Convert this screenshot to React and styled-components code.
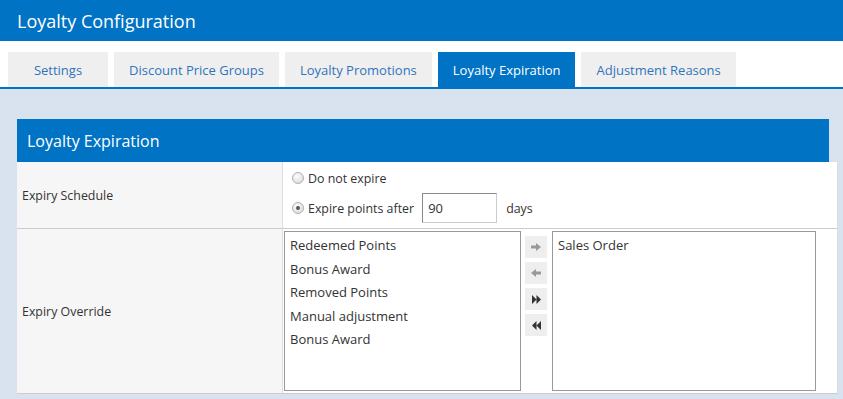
import React from 'react';
import styled, { createGlobalStyle } from 'styled-components';

const BLUE = '#0073c4';

const GlobalStyle = createGlobalStyle`
	body {
		margin: 0;
		font-family: "Open Sans", "Liberation Sans", sans-serif;
		color: #333;
		background: #d9e2ef;
	}
	* { box-sizing: border-box; }
`;

const Page = styled.div`
	min-height: 100vh;
	overflow: hidden;
`;

const Header = styled.div`
	height: 41px;
	display: flex;
	align-items: center;
	padding-left: 17px;
	background: ${BLUE};
	color: white;
	font-size: 18px;
`;

const TabBar = styled.div`
	display: flex;
	gap: 6px;
	padding: 11px 0 0 8px;
	background: white;
	border-bottom: 2px solid ${BLUE};
`;

const Tab = styled.div`
	height: 35px;
	min-width: 100px;
	padding: 0 15px;
	display: flex;
	align-items: center;
	justify-content: center;
	font-size: 13px;
	background: ${(p) => (p.active ? BLUE : '#efefef')};
	color: ${(p) => (p.active ? '#fff' : '#2f74bd')};
`;

const Content = styled.div`
	padding: 30px 0 0 17px;
`;

const PanelHeader = styled.div`
	width: 812px;
	height: 43px;
	display: flex;
	align-items: center;
	padding-left: 10px;
	background: ${BLUE};
	color: white;
	font-size: 16px;
`;

const Table = styled.div`
	width: 821px;
	background: white;
	border-right: 1px solid #ddd;
	border-bottom: 1px solid #ccc;
`;

const Row = styled.div`
	display: grid;
	grid-template-columns: 266px 1fr;
	border-bottom: ${(p) => (p.last ? 'none' : '1px solid #ccc')};
`;

const LabelCell = styled.div`
	display: flex;
	align-items: center;
	padding-left: 5px;
	background: #f6f6f6;
	border-right: 1px solid #ddd;
	font-size: 12.4px;
`;

const ScheduleCell = styled.div`
	padding: 6px 8px 5px 9px;
	font-size: 12.4px;
`;

const RadioLine = styled.div`
	display: flex;
	align-items: center;
	height: ${(p) => (p.tall ? '30px' : '20px')};
	margin-top: ${(p) => (p.tall ? '5px' : '0')};
`;

const Radio = styled.span`
	position: relative;
	width: 12px;
	height: 12px;
	margin-right: 4px;
	border-radius: 50%;
	border: 1px solid #b0b0b0;
	background: radial-gradient(circle at 40% 35%, #fdfdfd, #d6d6d6);
	flex-shrink: 0;

	&::after {
		content: '';
		display: ${(p) => (p.checked ? 'block' : 'none')};
		position: absolute;
		left: 3px;
		top: 3px;
		width: 4px;
		height: 4px;
		border-radius: 50%;
		background: #555;
	}
`;

const DaysInput = styled.input`
	width: 75px;
	height: 30px;
	margin-left: 8px;
	padding: 0 0 0 5px;
	border: 1px solid;
	border-color: #8a8a8a #ccc #ccc #8a8a8a;
	font-family: inherit;
	font-size: 13px;
	color: #333;
	outline: none;
`;

const Unit = styled.span`
	margin-left: 9px;
`;

const OverrideCell = styled.div`
	display: flex;
	align-items: flex-start;
	padding: 2px 0 2px 1px;
`;

const ListBox = styled.div`
	width: ${(p) => p.width}px;
	height: 160px;
	padding-top: 2px;
	border: 1px solid #999;
	background: white;
`;

const ListItem = styled.div`
	height: 23.5px;
	line-height: 23.5px;
	padding: 0 5px;
	font-size: 13px;
`;

const MoveButtons = styled.div`
	display: flex;
	flex-direction: column;
	gap: 4px;
	margin: 5px 5px 0 4px;
`;

const MoveButton = styled.div`
	width: 22px;
	height: 22px;
	display: flex;
	align-items: center;
	justify-content: center;
	background: #eee;
`;

const ArrowIcon = ({ left }) => (
	<svg width="10" height="8" viewBox="0 0 10 8">
		<path
			d="M0 2.6h5V0l5 4-5 4V5.4H0z"
			fill="#999"
			transform={left ? 'translate(10 0) scale(-1 1)' : undefined}
		/>
	</svg>
);

const DoubleIcon = ({ left }) => (
	<svg width="9" height="9" viewBox="0 0 8 8">
		<path
			d="M0 0l4 4-4 4z M4 0l4 4-4 4z"
			fill="#333"
			transform={left ? 'translate(8 0) scale(-1 1)' : undefined}
		/>
	</svg>
);

const tabs = [
	'Settings',
	'Discount Price Groups',
	'Loyalty Promotions',
	'Loyalty Expiration',
	'Adjustment Reasons',
];

const available = [
	'Redeemed Points',
	'Bonus Award',
	'Removed Points',
	'Manual adjustment',
	'Bonus Award',
];

const selected = ['Sales Order'];

const App = () => {
	return (
		<Page>
			<GlobalStyle />
			<Header>Loyalty Configuration</Header>
			<TabBar>
				{tabs.map((t) => (
					<Tab key={t} active={t === 'Loyalty Expiration'}>
						{t}
					</Tab>
				))}
			</TabBar>
			<Content>
				<PanelHeader>Loyalty Expiration</PanelHeader>
				<Table>
					<Row>
						<LabelCell>Expiry Schedule</LabelCell>
						<ScheduleCell>
							<RadioLine>
								<Radio />
								Do not expire
							</RadioLine>
							<RadioLine tall>
								<Radio checked />
								Expire points after
								<DaysInput defaultValue="90" />
								<Unit>days</Unit>
							</RadioLine>
						</ScheduleCell>
					</Row>
					<Row last>
						<LabelCell>Expiry Override</LabelCell>
						<OverrideCell>
							<ListBox width={237}>
								{available.map((item, id) => (
									<ListItem key={id}>{item}</ListItem>
								))}
							</ListBox>
							<MoveButtons>
								<MoveButton>
									<ArrowIcon />
								</MoveButton>
								<MoveButton>
									<ArrowIcon left />
								</MoveButton>
								<MoveButton>
									<DoubleIcon />
								</MoveButton>
								<MoveButton>
									<DoubleIcon left />
								</MoveButton>
							</MoveButtons>
							<ListBox width={264}>
								{selected.map((item, id) => (
									<ListItem key={id}>{item}</ListItem>
								))}
							</ListBox>
						</OverrideCell>
					</Row>
				</Table>
			</Content>
		</Page>
	);
};

export default App;
